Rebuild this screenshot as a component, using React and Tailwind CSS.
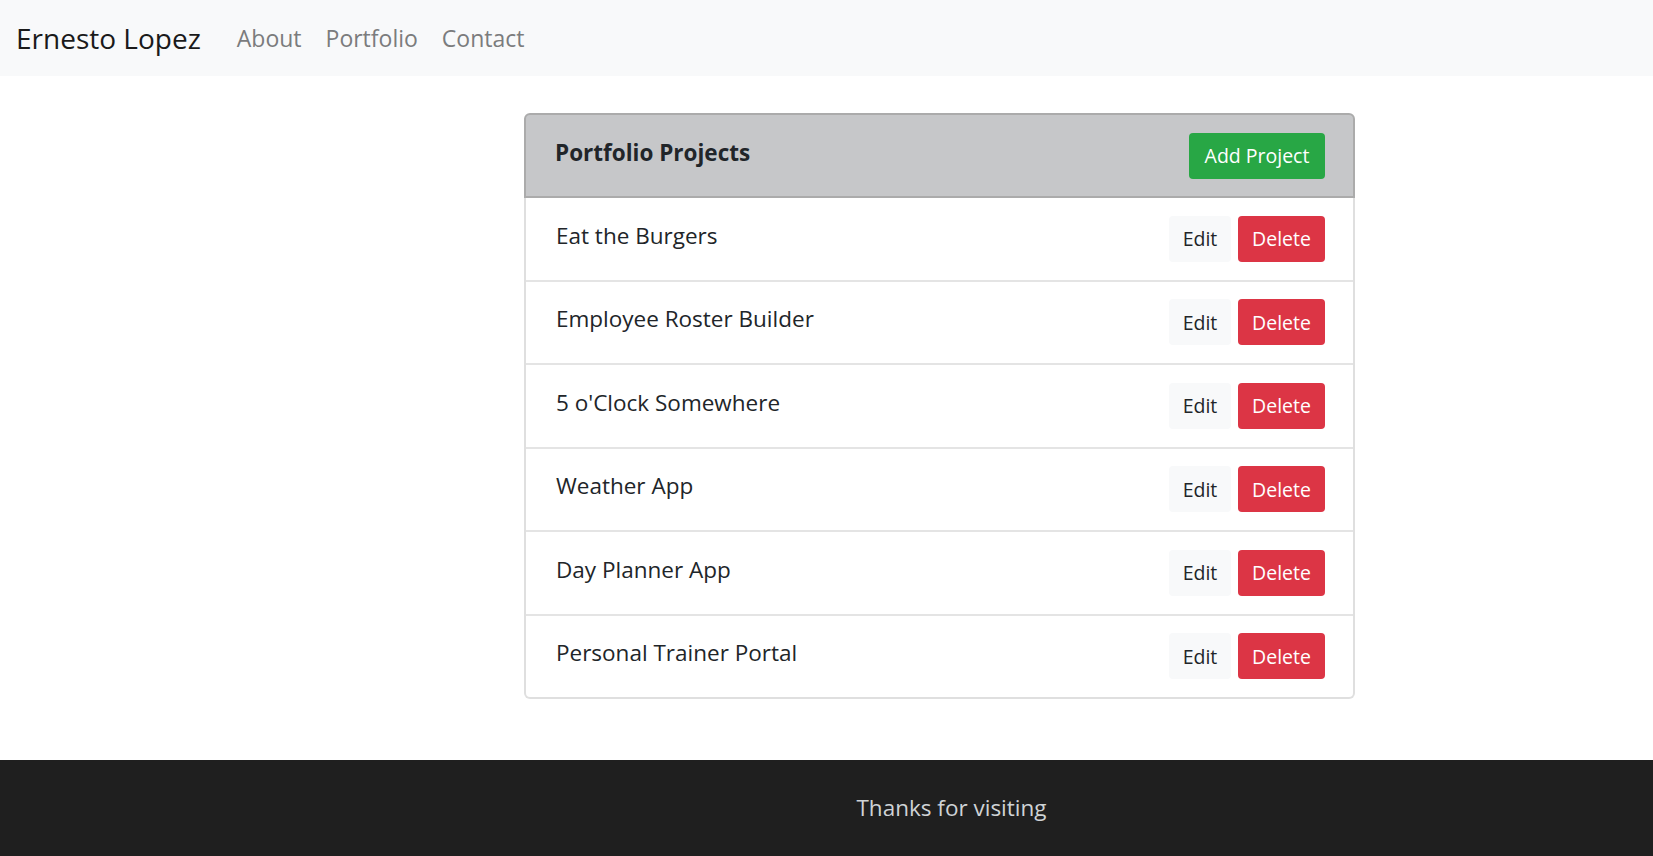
import React from 'react';

const projects = [
  'Eat the Burgers',
  'Employee Roster Builder',
  "5 o'Clock Somewhere",
  'Weather App',
  'Day Planner App',
  'Personal Trainer Portal',
];

const Navbar = () => (
  <nav className="flex h-[76px] items-center bg-[#f8f9fa] px-[16px]">
    <a href="#" className="mr-[24px] text-[28px] leading-[45px] text-[#1a1a1a]">
      Ernesto Lopez
    </a>
    <ul className="flex">
      {['About', 'Portfolio', 'Contact'].map(link => (
        <li key={link}>
          <a href="#" className="block px-[12px] text-[23px] leading-[36px] text-[#7b7c7d]">
            {link}
          </a>
        </li>
      ))}
    </ul>
  </nav>
);

const ProjectRow = ({ name, last }) => (
  <li
    className={
      'flex items-start justify-between pl-[30px] pr-[28px] py-[17.75px] ' +
      (last ? '' : 'border-b-2 border-[#e4e4e4]')
    }
  >
    <span className="pt-[2px] text-[22.5px] leading-[36px] text-[#212529]">{name}</span>
    <div className="flex gap-[7px]">
      <button className="flex h-[46px] w-[62px] items-center justify-center rounded-[4px] bg-[#f8f9fa] text-[19.5px] text-[#212529]">
        Edit
      </button>
      <button className="flex h-[46px] w-[87px] items-center justify-center rounded-[4px] bg-[#dc3545] text-[19.5px] text-white">
        Delete
      </button>
    </div>
  </li>
);

const App = () => {
  return (
    <div className="bg-white font-['Open_Sans',sans-serif]">
      <Navbar />

      <div className="ml-[524px] mt-[37px] w-[831px]">
        <div className="flex items-start justify-between rounded-t-[6px] border-2 border-[#ababab] bg-[#c6c7c9] pl-[29px] pr-[28px] pb-[17px] pt-[18px]">
          <h5 className="pt-[2px] text-[22.5px] font-bold leading-[36px] text-[#212529]">Portfolio Projects</h5>
          <button className="flex h-[46px] w-[136px] items-center justify-center rounded-[4px] bg-[#28a745] text-[19.5px] text-white">
            Add Project
          </button>
        </div>
        <ul className="rounded-b-[6px] border-x-2 border-b-2 border-[#dfdfdf]">
          {projects.map((p, i) => (
            <ProjectRow key={p} name={p} last={i === projects.length - 1} />
          ))}
        </ul>
      </div>

      <footer className="mt-[61px] h-[96px] bg-[#1f1f1f] pl-[250px] pt-[30px] text-center">
        <p className="text-[22.5px] leading-[36px] text-[#cfd3d6]">Thanks for visiting</p>
      </footer>
    </div>
  );
};

export default App;
